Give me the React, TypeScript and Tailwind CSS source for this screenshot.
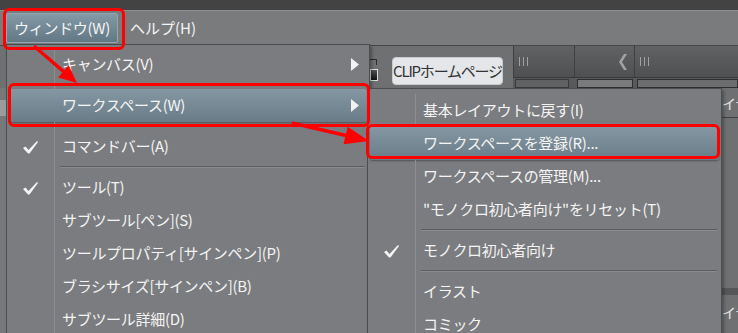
import React from 'react';

type Row = { label?: string; check?: boolean; sub?: boolean; active?: boolean; sep?: boolean };

const mainItems: Row[] = [
  { label: 'キャンバス(V)', sub: true },
  { sep: true },
  { label: 'ワークスペース(W)', sub: true, active: true },
  { sep: true },
  { label: 'コマンドバー(A)', check: true },
  { sep: true },
  { label: 'ツール(T)', check: true },
  { label: 'サブツール[ペン](S)' },
  { label: 'ツールプロパティ[サインペン](P)' },
  { label: 'ブラシサイズ[サインペン](B)' },
  { label: 'サブツール詳細(D)' },
];

const subItems: Row[] = [
  { label: '基本レイアウトに戻す(I)' },
  { label: 'ワークスペースを登録(R)...', active: true },
  { label: 'ワークスペースの管理(M)...' },
  { label: '"モノクロ初心者向け"をリセット(T)' },
  { sep: true },
  { label: 'モノクロ初心者向け', check: true },
  { sep: true },
  { label: 'イラスト' },
  { label: 'コミック' },
];

function Check() {
  return (
    <svg width="17" height="14" viewBox="0 0 17 14">
      <polygon points="1,8 3.5,6.5 6.5,10 15,1 16,2 7.5,13.5 6,13.5" fill="#f4f4f4" />
    </svg>
  );
}

function SubArrow() {
  return (
    <svg width="8" height="13" viewBox="0 0 8 13">
      <polygon points="0,0 8,6.5 0,13" fill="#f2f2f2" />
    </svg>
  );
}

function Grip() {
  return (
    <div className="flex gap-[3px]">
      <div className="w-px h-[9px] bg-[#a0a1a3]" />
      <div className="w-px h-[9px] bg-[#a0a1a3]" />
      <div className="w-px h-[9px] bg-[#a0a1a3]" />
    </div>
  );
}

function Menu({ items }: { items: Row[] }) {
  return (
    <>
      {items.map((it, i) =>
        it.sep ? (
          <div key={i} className="flex h-[8px]">
            <div className="w-[48px] shrink-0 border-r border-[#8e8f92]" />
            <div className="flex-1 flex flex-col justify-center ml-[5px] mr-[4px]">
              <div className="h-px bg-[#5c5d60]" />
              <div className="h-px bg-[#8a8b8e]" />
            </div>
          </div>
        ) : (
          <div
            key={i}
            className={`flex h-[33px] items-center ${
              it.active
                ? 'mx-[2px] rounded-[3px] bg-gradient-to-b from-[#8597a2] to-[#6a7c87] shadow-[0_1px_2px_rgba(0,0,0,0.35)]'
                : ''
            }`}
          >
            <div
              className={`h-full flex items-center justify-center shrink-0 border-r ${
                it.active ? 'w-[46px] border-transparent' : 'w-[48px] border-[#8e8f92]'
              }`}
            >
              {it.check ? <Check /> : null}
            </div>
            <div className="flex-1 pl-[7px] text-[15px] tracking-[-0.3px] text-[#f4f4f4] whitespace-nowrap">
              {it.label}
            </div>
            {it.sub ? (
              <div className={`${it.active ? 'pr-[8px]' : 'pr-[10px]'} flex items-center`}>
                <SubArrow />
              </div>
            ) : null}
          </div>
        )
      )}
    </>
  );
}

export default function App() {
  return (
    <div className="relative w-[738px] h-[333px] overflow-hidden bg-[#6f7072] font-['Noto_Sans_CJK_JP','Noto_Sans',sans-serif]">
      {/* title bar */}
      <div className="h-[10px] bg-[#434343]" />

      {/* menu bar */}
      <div className="h-[35px] bg-[#7a7b7d] border-t border-[#8d8e90] flex items-center pl-[6px]">
        <div className="h-[30px] w-[112px] flex items-center justify-center rounded-[2px] border border-[#93a5b0] bg-gradient-to-b from-[#8499a6] to-[#627885] text-[15px] tracking-[-0.3px] text-[#f4f4f4]">
          ウィンドウ(W)
        </div>
        <div className="ml-[12px] text-[15px] tracking-[0px] text-[#f4f4f4]">ヘルプ(H)</div>
      </div>

      {/* tool bar */}
      <div className="flex h-[43px] border-t border-[#46474a]">
        <div className="w-[513px] flex items-start pt-[11px] pl-[370px]">
          <div className="w-[8px] h-[26px] flex flex-col justify-between py-[2px]">
            <div className="w-[7px] h-[6px] border-t border-r border-[#2e2e2e]" />
            <div className="w-[8px] h-[12px] bg-gradient-to-b from-[#555] to-[#111] border border-[#ddd]" />
          </div>
          <div className="ml-[14px] w-[111px] h-[28px] rounded-[4px] bg-[#e4e6e9] border border-[#c9cbce] flex items-center justify-center text-[15px] tracking-[-1.2px] text-[#333] whitespace-nowrap">
            CLIPホームページ
          </div>
        </div>
        <div className="flex-1 flex">
          <div className="w-[62px] flex flex-col">
            <div className="h-[31px] bg-gradient-to-b from-[#616264] to-[#4f5052] border-l border-r border-[#3e3f41] flex items-center pl-[5px]">
              <Grip />
            </div>
            <div className="flex-1 bg-[#59595b] border-t border-[#3a3a3c] pt-[1px] pl-[2px]">
              <div className="w-[54px] h-full border border-[#3a3a3c] bg-[#606163]" />
            </div>
          </div>
          <div className="w-[60px] flex flex-col">
            <div className="h-[31px] bg-gradient-to-b from-[#616264] to-[#4f5052] border-r border-[#3e3f41] flex items-center justify-end pr-[7px]">
              <svg width="8" height="16" viewBox="0 0 8 16">
                <polygon points="8,0 3,8 8,16 5,16 0,8 5,0" fill="#a2a3a5" />
              </svg>
            </div>
            <div className="flex-1 bg-[#59595b] border-t border-[#3a3a3c] pt-[1px] px-[2px]">
              <div className="h-full border border-[#2f2f31] bg-[#7a7b7d]" />
            </div>
          </div>
          <div className="flex-1 flex flex-col">
            <div className="h-[31px] bg-gradient-to-b from-[#616264] to-[#4f5052] flex items-center pl-[5px]">
              <Grip />
            </div>
            <div className="flex-1 bg-[#59595b] border-t border-[#3a3a3c] pt-[1px] pl-[2px]">
              <div className="h-full border border-[#2f2f31] bg-[#6c6d6f]" />
            </div>
          </div>
        </div>
      </div>

      {/* work area */}
      <div className="flex h-[245px]">
        <div className="w-[6px] bg-[#77787a] pt-[12px]">
          <div className="h-[16px] bg-[#9a9b9d]" />
        </div>
        <div className="flex-1" />
        <div className="w-[16px] flex flex-col bg-[#6f7072]">
          <div className="h-[30px] border-b border-[#3f4042] text-[14px] text-[#e6e6e6] leading-[30px] whitespace-nowrap overflow-hidden">
            イヤ
          </div>
          <div className="flex-1" />
          <div className="h-[7px] bg-[#555658]" />
          <div className="h-[38px] text-[14px] text-[#e6e6e6] leading-[34px] whitespace-nowrap overflow-hidden">
            イヤ
          </div>
        </div>
      </div>

      {/* window menu dropdown */}
      <div className="absolute left-[6px] top-[44px] w-[364px] h-[300px] bg-[#7b7c7f] border border-[#4c4d50] pt-[3px] shadow-[2px_2px_3px_rgba(0,0,0,0.3)]">
        <Menu items={mainItems} />
      </div>

      {/* workspace submenu */}
      <div className="absolute left-[367px] top-[88px] w-[355px] h-[260px] bg-[#7b7c7f] border border-[#4c4d50] pt-[5px] shadow-[2px_2px_3px_rgba(0,0,0,0.3)]">
        <Menu items={subItems} />
      </div>

      {/* red annotations */}
      <div className="absolute left-[3px] top-[8px] w-[122px] h-[42px] border-[3px] border-[#ff0000] rounded-[6px]" />
      <div className="absolute left-[8px] top-[83px] w-[362px] h-[44px] border-[3px] border-[#ff0000] rounded-[6px]" />
      <div className="absolute left-[366px] top-[124px] w-[354px] h-[35px] border-[3px] border-[#ff0000] rounded-[6px]" />
      <svg className="absolute left-0 top-0 pointer-events-none" width="738" height="333" viewBox="0 0 738 333">
        <line x1="34" y1="46" x2="64" y2="72" stroke="#ff0000" strokeWidth="3.5" />
        <polygon points="77,83 58.2,77.4 68.6,65.2" fill="#ff0000" />
        <line x1="292" y1="123" x2="346" y2="135.5" stroke="#ff0000" strokeWidth="3.5" />
        <polygon points="369,141 343.5,144.3 347.7,126.7" fill="#ff0000" />
      </svg>
    </div>
  );
}
